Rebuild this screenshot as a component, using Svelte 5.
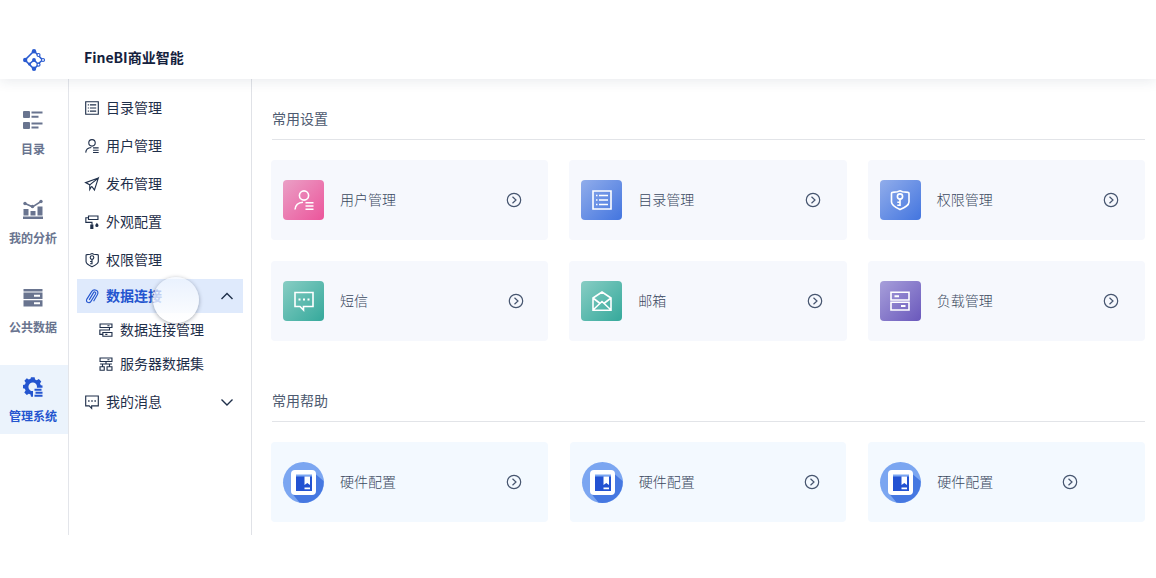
<script>
    const rail = [
        { icon: "catalog", label: "目录" },
        { icon: "chart", label: "我的分析" },
        { icon: "database", label: "公共数据" },
        { icon: "gear", label: "管理系统", active: true },
    ];

    const menu = [
        { icon: "list", label: "目录管理" },
        { icon: "user", label: "用户管理" },
        { icon: "plane", label: "发布管理" },
        { icon: "roller", label: "外观配置" },
        { icon: "shield", label: "权限管理" },
        {
            icon: "clip",
            label: "数据连接",
            open: true,
            children: [
                { icon: "link", label: "数据连接管理" },
                { icon: "server", label: "服务器数据集" },
            ],
        },
        { icon: "message", label: "我的消息", children: [] },
    ];

    const settings = [
        { icon: "user", label: "用户管理", tone: "pink" },
        { icon: "list", label: "目录管理", tone: "blue" },
        { icon: "shield", label: "权限管理", tone: "blue" },
        { icon: "message", label: "短信", tone: "green", end: "near" },
        { icon: "mail", label: "邮箱", tone: "green", end: "near" },
        { icon: "load", label: "负载管理", tone: "purple" },
    ];

    const help = [
        { label: "硬件配置" },
        { label: "硬件配置" },
        { label: "硬件配置", end: "far" },
    ];
</script>

{#snippet lineIcon(name)}
    <svg class="line-icon" viewBox="0 0 20 20" aria-hidden="true">
        {#if name === "list"}
            <path d="M1 1h18v18H1zM7 5.5h9M7 10h9M7 14.5h9M4 5.5h1.5M4 10h1.5M4 14.5h1.5" />
        {:else if name === "user"}
            <circle cx="10" cy="5.5" r="4.6" />
            <path d="M1 19.5c.4-4.5 3.2-7 8-7.3M11.5 12.7h8M11.5 16h8M11.5 19.3h8" />
        {:else if name === "plane"}
            <path d="M19 1.5L.8 8l6 3.200L19 1.500l-5.500 17-4-5.300M6.800 11.200v6.500l2.700-4.500" />
        {:else if name === "roller"}
            <path d="M5 1.500h13.500v5H5zM5 4H1.200v6.500H10V14" />
            <path class="solid" d="M7.500 13.500h4.500V20H7.500zM17 11c1.400 2 2.300 2.700 2.300 4a2.300 2.300 0 0 1-4.600 0c0-1.300.9-2 2.300-4z" />
        {:else if name === "shield"}
            <path d="M10 .8l2.500 1 5.500.6c.7 0 1 .4 1 1V12c0 3.500-4.500 5.500-9 7.500C5.500 17.500 1.500 15.500 1.500 12V3.400c0-.6.300-1 1-1l5-.6z" />
            <circle cx="10" cy="6.500" r="2.600" />
            <path d="M10 9.200V16M7.300 12.200H10M7.300 15.300H10" />
        {:else if name === "clip"}
            <path d="M6 15.500l6-10c1.500-2.500 4.500-.8 3 1.700l-6.500 10.500c-2.500 3.800-8.300 1-5.800-3.300L9.500 3.700C12.700-1 20.500 2 17.800 8l-5.500 9.500" />
        {:else if name === "link"}
            <path d="M1.500 1.500h17v5h-17zM5.500 13.500h13v5.500h-13zM12 4h3M9 16.200h3M15 6.500V10H1.200v6.200h4" />
        {:else if name === "server"}
            <path d="M1.500 1.500h17v5h-17zM1.500 14h6v5h-6zM11.500 14h7v5h-7zM12 4h3M1.500 10h17M10 6.500V10M5 10v4M15 10v4" />
        {:else if name === "message"}
            <path d="M1 1.500h18v14H9.500V19L6 15.500H1z" />
            <path class="dots" d="M4.500 8.500h2M9 8.500h2M13.500 8.500h2" />
        {:else if name === "mail"}
            <path d="M1 7l9-6 9 6v12.200H1zM1 7l6.500 5M19 7l-6.500 5M1 19l9-8.500 9 8.500" />
        {:else if name === "load"}
            <path d="M1 1.200h18v7.800H1zM1 11.200h18V19H1z" />
            <path class="dots" d="M4.500 5.200H9M11 15h4.500" />
        {/if}
    </svg>
{/snippet}

{#snippet railIcon(name)}
    <svg class="rail-icon" viewBox="0 0 20 20" aria-hidden="true">
        {#if name === "catalog"}
            <rect x="0" y="1" width="7" height="7" rx="1" />
            <rect x="0" y="12" width="7" height="7" rx="1" />
            <path d="M8.500 1.500h11v2h-11zM8.500 5.700h7v2h-7zM8.500 12.500h11v2h-11zM8.500 16.500h7v2h-7z" />
        {:else if name === "chart"}
            <path d="M0 17.500h20V20H0zM.5 10h5v6.500h-5zM7.500 12h5v4.500h-5zM14.500 7.500h5v9h-5z" />
            <path class="trend" d="M2 4.500l7.500 3.300L18 2.500" />
            <circle cx="2" cy="4.500" r="1.700" />
            <circle cx="9.500" cy="7.500" r="1.700" />
            <circle cx="18" cy="2.500" r="1.700" />
        {:else if name === "database"}
            <path d="M.5 1h19v2.500H.5z" />
            <path fill-rule="evenodd" d="M.5 4.500h19V11H.5zM11 6.700h6v2h-6zM.5 12.200h19v6.300H.5zM11 14.300h6v2h-6z" />
        {:else}
            <path
                fill-rule="evenodd"
                d="M8 .2h3.600l.5 2.300 1.700.8 2-1.300 2.500 2.500-1.300 2 .8 1.700 1.700.4v2.200h-5.600A4.300 4.300 0 1 0 10 14.100v5.700H8l-.5-2.400-1.700-.7-2 1.300-2.500-2.500 1.300-2-.7-1.700L0 11.300V7.900l2-.5.700-1.700-1.300-2L3.800 1.200l2 1.300 1.700-.7z"
            />
            <path d="M11.500 11.800h7v2h-7zM12.500 14.800h7v2h-7zM11.500 17.800h8v2h-8z" />
        {/if}
    </svg>
{/snippet}

{#snippet arrow()}
    <svg class="arrow" viewBox="0 0 16 16" aria-hidden="true">
        <circle cx="8" cy="8" r="6.700" />
        <path d="M6.500 4.700L10 8l-3.500 3.300" />
    </svg>
{/snippet}

{#snippet bookIcon()}
    <svg class="book" viewBox="0 0 41 41" aria-hidden="true">
        <circle cx="20.500" cy="20.500" r="20.500" fill="#7ba6f1" />
        <path d="M33 12.500l7.600 6.500A20.500 20.500 0 0 1 16.500 40.600L9.500 32z" fill="#4678e1" />
        <rect x="8" y="8" width="25" height="25" rx="4" fill="#fff" />
        <path d="M13 12.500h16V15H13z" fill="#7ba6f1" />
        <path d="M13 14.500h16V29H13z" fill="#2352d2" />
        <path d="M21.500 14.500H27V23l-2.700-2-2.800 2zM21.500 25.500H27v1.700h-5.500z" fill="#fff" />
    </svg>
{/snippet}

<header>
    <svg class="logo" viewBox="0 0 22 22" aria-hidden="true">
        <path d="M11 2L2 11l9 9 4-4M11 2l4 4M7 14.500L11 11l4 4 4.500-4L15 6" />
        <g class="dots">
            <circle cx="11" cy="2.200" r="2.200" />
            <circle cx="2.200" cy="11" r="2.200" />
            <circle cx="11" cy="19.800" r="2.200" />
            <circle cx="11" cy="11" r="1.900" />
            <circle cx="6.500" cy="15" r="1.500" />
        </g>
        <g class="rings">
            <circle cx="15.500" cy="6" r="1.500" />
            <circle cx="20" cy="11" r="1.500" />
            <circle cx="15.500" cy="15.700" r="1.500" />
        </g>
    </svg>
    <h1>FineBI商业智能</h1>
</header>

<div class="layout">
    <nav class="rail" aria-label="主导航">
        {#each rail as item}
            <button class:active={item.active}>
                {@render railIcon(item.icon)}
                <span>{item.label}</span>
            </button>
        {/each}
    </nav>

    <nav class="menu" aria-label="管理系统">
        {#each menu as item}
            <button class="menu-item" class:open={item.open} aria-expanded={item.children ? !!item.open : undefined}>
                {@render lineIcon(item.icon)}
                <span>{item.label}</span>
                {#if item.children}
                    <svg class="chevron" viewBox="0 0 12 12" aria-hidden="true">
                        <path d={item.open ? "M.5 9L6 3.500 11.500 9" : "M.5 3.500L6 9l5.500-5.500"} />
                    </svg>
                {/if}
                {#if item.open}
                    <i class="touch"></i>
                {/if}
            </button>
            {#if item.open}
                <div class="submenu">
                    {#each item.children as child}
                        <button class="menu-item sub">
                            {@render lineIcon(child.icon)}
                            <span>{child.label}</span>
                        </button>
                    {/each}
                </div>
            {/if}
        {/each}
    </nav>

    <main>
        <section>
            <h2>常用设置</h2>
            <div class="cards">
                {#each settings as card}
                    <button class="card {card.end}">
                        <span class="tile {card.tone}">{@render lineIcon(card.icon)}</span>
                        <span class="name">{card.label}</span>
                        {@render arrow()}
                    </button>
                {/each}
            </div>
        </section>

        <section>
            <h2>常用帮助</h2>
            <div class="cards help">
                {#each help as card}
                    <button class="card {card.end}">
                        {@render bookIcon()}
                        <span class="name">{card.label}</span>
                        {@render arrow()}
                    </button>
                {/each}
            </div>
        </section>
    </main>
</div>

<style>
    :global(body) {
        background: #fff;
        color: #1f2f4a;
        font-family: "Noto Sans CJK SC", sans-serif;
        font-size: 14px;
    }

    button {
        border: 0;
        margin: 0;
        padding: 0;
        background: none;
        color: inherit;
        font: inherit;
        cursor: pointer;
    }

    svg {
        display: block;
        flex: none;
        overflow: visible;
    }

    header {
        position: relative;
        display: flex;
        align-items: flex-end;
        gap: 39px;
        padding: 43px 23px 8px;
        background: #fff;
        box-shadow: 0 2px 12px rgba(31, 45, 80, 0.1);
    }

    h1 {
        margin: 0;
        color: #14213d;
        font-size: 14px;
        font-weight: 700;
        line-height: 28px;
    }

    .logo {
        width: 22px;
        height: 22px;
        fill: none;
        stroke: #2a5bd0;
        stroke-width: 1.6;
    }

    .logo .dots {
        fill: #2a5bd0;
        stroke: none;
    }

    .logo .rings {
        fill: #fff;
        stroke-width: 1.2;
    }

    .layout {
        display: flex;
    }

    /* left icon rail */
    .rail {
        display: flex;
        flex-direction: column;
        gap: 20px;
        flex: none;
        width: 68px;
        padding-top: 19px;
        border-right: 1px solid #e3e5ea;
    }

    .rail button {
        display: flex;
        flex-direction: column;
        align-items: center;
        gap: 10px;
        padding: 12px 2px 9px 0;
        color: #69748f;
        font-size: 12px;
        font-weight: 700;
        line-height: 18px;
    }

    .rail .active {
        background: #ebf3fc;
        color: #2455cf;
    }

    .rail-icon {
        width: 20px;
        height: 20px;
        fill: currentColor;
    }

    .trend {
        fill: none;
        stroke: currentColor;
        stroke-width: 1.5;
    }

    /* settings menu */
    .menu {
        flex: none;
        width: 166px;
        padding: 10px 8px 0;
        border-right: 1px solid #e0e2e7;
    }

    .menu-item {
        position: relative;
        display: flex;
        align-items: center;
        gap: 7px;
        width: 100%;
        height: 38px;
        padding: 0 10px 0 8px;
    }

    .menu-item span,
    .name {
        padding-bottom: 2px;
    }

    .menu-item .line-icon {
        width: 14px;
        height: 14px;
    }

    .menu-item.open {
        height: 34px;
        background: #dfeafc;
    }

    .open span,
    .open .line-icon {
        color: #2455cf;
    }

    .open span {
        font-weight: 700;
    }

    .submenu {
        padding-bottom: 2px;
    }

    .menu-item.sub {
        height: 34px;
        padding-left: 22px;
    }

    .line-icon {
        fill: none;
        stroke: currentColor;
        stroke-width: 1.6;
    }

    .line-icon .solid {
        fill: currentColor;
        stroke: none;
    }

    .line-icon .dots {
        stroke-width: 2;
    }

    .chevron {
        width: 12px;
        height: 12px;
        margin-left: auto;
        fill: none;
        stroke: currentColor;
        stroke-width: 1.4;
    }

    .touch {
        position: absolute;
        z-index: 1;
        top: -2px;
        left: 76px;
        width: 46px;
        height: 46px;
        border-radius: 50%;
        background: linear-gradient(rgba(240, 246, 255, 0.6), rgba(255, 255, 255, 0.95));
        box-shadow: 0 1px 4px rgba(30, 40, 60, 0.4);
    }

    /* content */
    main {
        display: flex;
        flex: 1;
        flex-direction: column;
        gap: 50px;
        min-width: 0;
        padding: 30px 11px 13px 19px;
    }

    h2 {
        margin: 0 0 20px 1px;
        padding-bottom: 12px;
        border-bottom: 1px solid #e2e4e8;
        color: #4d5a70;
        font-size: 14px;
        font-weight: 400;
        line-height: 18px;
    }

    .cards {
        display: grid;
        grid-template-columns: repeat(3, 1fr);
        gap: 21px;
    }

    .cards.help {
        gap: 22px;
    }

    .card {
        display: flex;
        align-items: center;
        gap: 16px;
        height: 80px;
        padding: 0 26px 0 12px;
        border-radius: 4px;
        background: #f6f8fd;
        color: #3a4860;
        font-weight: 300;
    }

    .help .card {
        background: #f3f9ff;
    }

    .card.near {
        padding-right: 24px;
    }

    .card.far {
        padding-right: 67px;
    }

    .tile {
        display: flex;
        align-items: center;
        justify-content: center;
        width: 41px;
        height: 40px;
        border-radius: 4px;
        color: #fff;
    }

    .tile .line-icon {
        width: 20px;
        height: 20px;
    }

    .pink {
        background: linear-gradient(135deg, #eaa0c6, #ec559b);
    }

    .blue {
        background: linear-gradient(135deg, #91adeb, #4375df);
    }

    .green {
        background: linear-gradient(135deg, #88cdc4, #35a99b);
    }

    .purple {
        background: linear-gradient(135deg, #a79fda, #6a58bc);
    }

    .book {
        width: 41px;
        height: 41px;
    }

    .arrow {
        width: 16px;
        height: 16px;
        margin-left: auto;
        fill: none;
        stroke: #46556f;
        stroke-width: 1.2;
    }
</style>
